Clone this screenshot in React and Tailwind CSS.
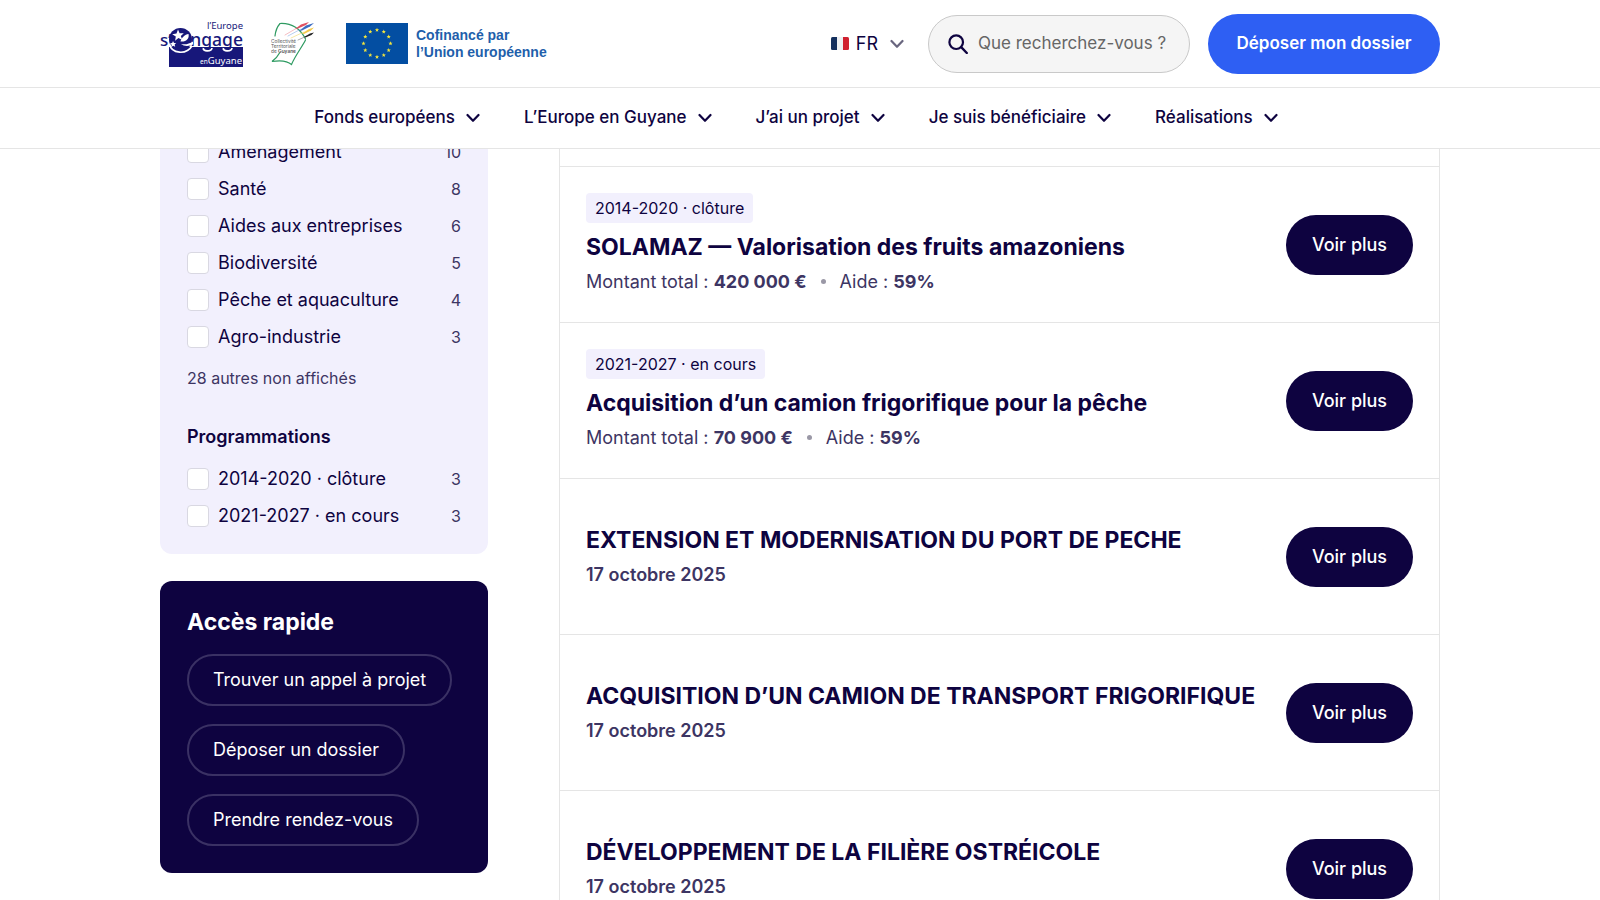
const NAV_ITEMS = [
  "Fonds européens",
  "L’Europe en Guyane",
  "J’ai un projet",
  "Je suis bénéficiaire",
  "Réalisations",
];

const THEMES = [
  { label: "Aménagement", count: 10 },
  { label: "Santé", count: 8 },
  { label: "Aides aux entreprises", count: 6 },
  { label: "Biodiversité", count: 5 },
  { label: "Pêche et aquaculture", count: 4 },
  { label: "Agro-industrie", count: 3 },
];

const PROGRAMMES = [
  { label: "2014-2020 · clôture", count: 3 },
  { label: "2021-2027 · en cours", count: 3 },
];

const QUICK_LINKS = ["Trouver un appel à projet", "Déposer un dossier", "Prendre rendez-vous"];

const PROJECTS = [
  {
    title: "SOLAMAZ — Valorisation des fruits amazoniens",
    period: "2014-2020 · clôture",
    amount: "420 000 €",
    rate: "59%",
  },
  {
    title: "Acquisition d’un camion frigorifique pour la pêche",
    period: "2021-2027 · en cours",
    amount: "70 900 €",
    rate: "59%",
  },
  { title: "EXTENSION ET MODERNISATION DU PORT DE PECHE", date: "17 octobre 2025" },
  { title: "ACQUISITION D’UN CAMION DE TRANSPORT FRIGORIFIQUE", date: "17 octobre 2025" },
  { title: "DÉVELOPPEMENT DE LA FILIÈRE OSTRÉICOLE", date: "17 octobre 2025" },
];

function Chevron({ className }) {
  return (
    <svg aria-hidden="true" className={className} fill="none" viewBox="0 0 14 10">
      <path d="M1.5 2 7 7.8 12.5 2" stroke="currentColor" strokeLinecap="round" strokeLinejoin="round" strokeWidth="2.2" />
    </svg>
  );
}

function EngageLogo() {
  return (
    <svg aria-label="l’Europe s’engage en Guyane" className="h-12 w-[84px]" role="img" viewBox="0 0 84 48">
      <rect fill="#17177a" height="20" width="74" x="9" y="27" />
      <g fontFamily="'Noto Sans', sans-serif">
        <text fill="#17177a" fontSize="9.500" textAnchor="end" x="83" y="9">l’Europe</text>
        <text fill="#17177a" fontSize="17" fontWeight="500" x="0" y="26">s’</text>
        <text fill="#17177a" fontSize="17.500" fontWeight="500" textAnchor="end" x="83" y="26">ngage</text>
        <text fill="#fff" fontSize="6.500" x="40" y="43.500">en</text>
        <text fill="#fff" fontSize="9.500" textAnchor="end" x="82" y="43.500">Guyane</text>
      </g>
      {/* descenders of the two "g" turn white over the band */}
      <path d="M43.500 28c-1.500 3.500 8 4 8.500 0M63.500 28c-1.500 3.500 8 4 8.500 0" fill="none" stroke="#fff" strokeWidth="1.800" />
      <circle cx="20.500" cy="19.500" fill="#17177a" r="11.500" />
      <path d="M9.500 24c2 10 17 11 22.500 2" fill="none" stroke="#fff" strokeWidth="1.600" />
      <path d="M20.500 21.500c6 .5 9-3 8-7.500-3.500.5-7 3.500-8 7.500Z" fill="#fff" />
      <path d="M21 24c5 1 8-.2 12-2.500v3c-4 2-9 2-12-.5Z" fill="#fff" />
      <path d="m18 9.500 1.600 3.800 4.200-.1-3 2.800 1.600 4-4-1.900-3.300 2.600.7-4.200-3.600-2.200 4.300-.8Z" fill="#fff" />
      <path d="m13 21 1 2 2.200.1-1.600 1.500.6 2.200-2-1.100-1.900 1.300.4-2.300-1.700-1.400 2.200-.3Z" fill="#fff" />
    </svg>
  );
}

function CollectiviteLogo() {
  return (
    <svg aria-label="Collectivité Territoriale de Guyane" className="h-11 w-[44px]" fill="none" role="img" viewBox="0 0 44 44">
      <g strokeLinecap="round">
        <path d="M4 14C4.500 9 6 5 9 1.500c10-.5 19 3 25.500 15.500M34.500 18C31 25 24 34 20.500 42.500 16 38.500 10 38 1 39.500 5 36.500 7 34 8.500 31" stroke="#2f9b62" strokeWidth="1.200" />
        <path d="M14 13 26 6" stroke="#f0a0a8" strokeWidth=".7" />
        <path d="M17 14 30 7" stroke="#9ab8e8" strokeWidth=".7" />
        <path d="M20 16 33 10" stroke="#f0dc80" strokeWidth=".7" />
        <path d="M27 18 36 14" stroke="#888" strokeWidth=".7" />
      </g>
      <path d="m24 7 6-4.500L38 0l-3 3-8 3.500Z" fill="#e05060" />
      <path d="m28 9 7-5.500L43 1l-4 3.500-8 4Z" fill="#3c6cc0" />
      <path d="m31 11.500 7-4.500 5-1.500-3 3-7 3.500Z" fill="#f2c94c" />
      <path d="m33 15 6-3.500 4-1-2.500 2.500-6 2.500Z" fill="#222" />
      <g fill="#555" fontFamily="Inter, sans-serif" fontSize="4.800">
        <text x="0" y="21">Collectivité</text>
        <text x="0" y="26">Territoriale</text>
        <text x="0" y="31">de <tspan fontWeight="600">Guyane</tspan></text>
      </g>
    </svg>
  );
}

function EuFlag() {
  const stars = Array.from({ length: 12 }, (_, index) => {
    const angle = (index * Math.PI) / 6;
    return { x: 31 + 13.5 * Math.sin(angle), y: 20.5 - 13.5 * Math.cos(angle) };
  });

  return (
    <svg aria-hidden="true" className="h-[41px] w-[62px]" viewBox="0 0 62 41">
      <rect fill="#034ea2" height="41" width="62" />
      {stars.map(({ x, y }) => (
        <path
          d="M0-2.200.6-.7 2.100-.7.900.3 1.300 1.800 0 .9-1.300 1.800-.9.300-2.100-.7-.6-.7Z"
          fill="#f5e63c"
          key={`${x}-${y}`}
          transform={`translate(${x} ${y})`}
        />
      ))}
    </svg>
  );
}

function TopBar() {
  return (
    <div className="border-b border-[#e5e5e5]">
      <div className="mx-auto flex h-[87px] max-w-7xl items-center justify-between">
        <div className="flex items-center">
          <a className="mr-[27px]" href="#"><EngageLogo /></a>
          <a className="mr-[31px]" href="#"><CollectiviteLogo /></a>
          <a className="flex items-center gap-2 font-[Liberation_Sans,Arial,sans-serif] text-[14px] leading-[17px] font-bold text-[#1f5fab]" href="#">
            <EuFlag />
            <span>Cofinancé par<br />l’Union européenne</span>
          </a>
        </div>

        <div className="flex items-center">
          <button className="mr-6 flex items-center text-lg" type="button">
            <svg aria-hidden="true" className="mr-[7px] h-[13px] w-[18px]" viewBox="0 0 18 13">
              <rect fill="#eef0f2" height="13" rx="1.500" width="18" />
              <path d="M6 0H1.500Q0 0 0 1.500v10Q0 13 1.500 13H6Z" fill="#14305e" />
              <path d="M12 0h4.500Q18 0 18 1.500v10q0 1.500-1.500 1.500H12Z" fill="#d0202f" />
            </svg>
            FR
            <Chevron className="ml-3 h-[10px] w-[14px] text-[#69667f]" />
          </button>

          <label className="mr-[18px] flex h-[58px] w-[262px] items-center rounded-[29px] border border-[#c9c9c9] bg-[#f5f5f5] pl-[19px]">
            <svg aria-hidden="true" className="mr-[10px] h-5 w-5 shrink-0" fill="none" viewBox="0 0 20 20">
              <circle cx="8.200" cy="8.200" r="6.800" stroke="currentColor" strokeWidth="2.200" />
              <path d="m13.200 13.200 5.600 5.800" stroke="currentColor" strokeLinecap="round" strokeWidth="2.400" />
            </svg>
            <input
              aria-label="Rechercher"
              className="w-full min-w-0 bg-transparent text-[17px] outline-none placeholder:text-[#666]"
              placeholder="Que recherchez-vous ?"
              type="search"
            />
          </label>

          <button className="h-[60px] w-[232px] rounded-[30px] bg-[#2e5ff3] text-[17px] font-semibold text-white" type="button">
            Déposer mon dossier
          </button>
        </div>
      </div>
    </div>
  );
}

function MainNav() {
  return (
    <nav className="flex h-[61px] items-center justify-center gap-11 border-b border-[#e5e5e5] pr-2">
      {NAV_ITEMS.map((item) => (
        <button className="flex items-center gap-[11px] text-[17px] font-medium" key={item} type="button">
          {item}
          <Chevron className="h-[10px] w-[14px]" />
        </button>
      ))}
    </nav>
  );
}

function FilterList({ items }) {
  return (
    <ul className="flex flex-col gap-[15px]">
      {items.map(({ label, count }) => (
        <li key={label}>
          <label className="flex h-[22px] items-center text-lg">
            <input
              className="mr-[9px] h-[22px] w-[22px] shrink-0 appearance-none rounded border border-[#d9d8e2] bg-white checked:bg-[#0e0340]"
              type="checkbox"
            />
            <span className="flex-1">{label}</span>
            <span className="text-base text-[#3d3563]">{count}</span>
          </label>
        </li>
      ))}
    </ul>
  );
}

function Sidebar() {
  return (
    <aside className="flex w-[328px] shrink-0 flex-col gap-[27px]">
      <section className="rounded-xl bg-[#f2f0fd] px-[27px] pt-8 pb-[27px]">
        <FilterList items={THEMES} />
        <p className="mt-[18px] text-base text-[#3d3563]">28 autres non affichés</p>
        <h2 className="mt-[35px] mb-[19px] text-lg leading-6 font-semibold">Programmations</h2>
        <FilterList items={PROGRAMMES} />
      </section>

      <section className="rounded-xl bg-[#0e0340] p-[27px] text-white">
        <h2 className="mb-[18px] text-[23px] leading-7 font-bold">Accès rapide</h2>
        <div className="flex flex-col items-start gap-[18px]">
          {QUICK_LINKS.map((link) => (
            <a
              className="flex h-[52px] items-center rounded-[26px] border-2 border-[#3a3164] px-6 text-lg"
              href="#"
              key={link}
            >
              {link}
            </a>
          ))}
        </div>
      </section>
    </aside>
  );
}

function ProjectRow({ project }) {
  const { title, period, amount, rate, date } = project;

  return (
    <article className="flex h-[156px] items-center justify-between border-t border-[#e5e5e5] px-[26px]">
      <div className="pb-[2px]">
        {period && (
          <span className="mb-2 flex h-[30px] w-fit items-center rounded bg-[#f2f0fd] px-[9px] text-base">{period}</span>
        )}
        <h3 className="text-[23px] leading-8 font-bold">{title}</h3>
        {date ? (
          <p className="mt-[6px] text-lg leading-[26px] font-semibold text-[#3d3563]">{date}</p>
        ) : (
          <p className="mt-[6px] flex items-center text-lg leading-[26px] text-[#3d3563]">
            <span>Montant total : <strong className="font-bold">{amount}</strong></span>
            <span className="mx-[14px] h-[5px] w-[5px] rounded-full bg-[#9a98a6]" />
            <span>Aide : <strong className="font-bold">{rate}</strong></span>
          </p>
        )}
      </div>
      <button className="h-[60px] w-[127px] shrink-0 rounded-[30px] bg-[#0e0340] text-lg font-medium text-white" type="button">
        Voir plus
      </button>
    </article>
  );
}

export default function App() {
  return (
    <div className="flex h-screen flex-col overflow-hidden bg-white font-[Inter,sans-serif] text-[#0e0340]">
      <header className="z-10 shrink-0 bg-white">
        <TopBar />
        <MainNav />
      </header>

      <main className="mx-auto -mt-10 flex w-full max-w-7xl items-start gap-[71px]">
        <Sidebar />
        <div className="min-w-0 flex-1 border-x border-[#e5e5e5] pt-[57px]">
          {PROJECTS.map((project) => (
            <ProjectRow key={project.title} project={project} />
          ))}
        </div>
      </main>
    </div>
  );
}
